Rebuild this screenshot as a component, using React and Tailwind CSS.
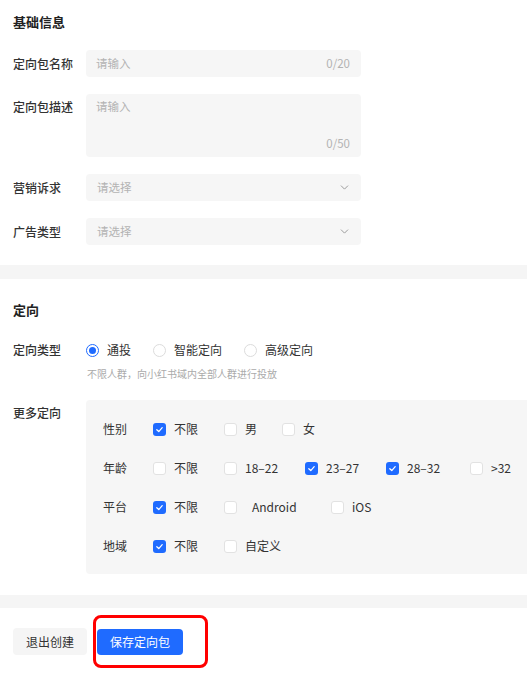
import React from "react";
import { ChevronDown } from "lucide-react";

const font = { fontFamily: '"Noto Sans CJK SC", "Noto Sans", sans-serif' };

const Label = ({ children, className = "" }) => (
  <div className={`w-[73px] shrink-0 text-[12px] leading-[16px] font-medium text-[#333] ${className}`}>
    {children}
  </div>
);

const Check = ({ checked }) =>
  checked ? (
    <span className="w-[13px] h-[13px] rounded-[3px] bg-[#1f6bff] flex items-center justify-center shrink-0">
      <svg width="9" height="9" viewBox="0 0 10 10" fill="none">
        <path d="M2 5.2 L4.2 7.3 L8 3" stroke="white" strokeWidth="1.4" strokeLinecap="round" strokeLinejoin="round" />
      </svg>
    </span>
  ) : (
    <span className="w-[13px] h-[13px] rounded-[3px] bg-white border border-[#e2e2e2] shrink-0" />
  );

const Radio = ({ checked }) =>
  checked ? (
    <span className="w-[13px] h-[13px] rounded-full border border-[#1f6bff] flex items-center justify-center shrink-0">
      <span className="w-[7px] h-[7px] rounded-full bg-[#1f6bff]" />
    </span>
  ) : (
    <span className="w-[13px] h-[13px] rounded-full border border-[#dcdcdc] bg-white shrink-0" />
  );

const Option = ({ checked, label, labelClass = "" }) => (
  <div className="flex items-center gap-[8px]">
    <Check checked={checked} />
    <span className={`text-[12px] leading-[16px] text-[#333] ${labelClass}`}>{label}</span>
  </div>
);

const Select = () => (
  <div className="w-[275px] h-[27px] rounded-[4px] bg-[#f6f6f6] flex items-center justify-between pl-[11px] pr-[10px]">
    <span className="text-[11.5px] text-[#b3b3b3]">请选择</span>
    <ChevronDown size={13} strokeWidth={1.8} className="text-[#999]" />
  </div>
);

const moreRows = [
  {
    name: "性别",
    opts: [
      { label: "不限", checked: true, w: "w-[71px]" },
      { label: "男", w: "w-[58px]" },
      { label: "女" },
    ],
  },
  {
    name: "年龄",
    opts: [
      { label: "不限", w: "w-[71px]" },
      { label: "18–22", w: "w-[81px]" },
      { label: "23–27", checked: true, w: "w-[81px]" },
      { label: "28–32", checked: true, w: "w-[84px]" },
      { label: ">32" },
    ],
  },
  {
    name: "平台",
    opts: [
      { label: "不限", checked: true, w: "w-[71px]" },
      { label: "Android", w: "w-[107px]", labelClass: "ml-[7px]" },
      { label: "iOS" },
    ],
  },
  {
    name: "地域",
    opts: [
      { label: "不限", checked: true, w: "w-[71px]" },
      { label: "自定义" },
    ],
  },
];

export default function App() {
  return (
    <div className="w-[527px] h-[678px] bg-white overflow-hidden" style={font}>
      {/* 基础信息 */}
      <div className="pl-[13px] pt-[14px] pb-[20px]">
        <div className="text-[13px] leading-[16px] font-semibold text-[#222]">基础信息</div>

        <div className="flex items-center mt-[20px]">
          <Label>定向包名称</Label>
          <div className="w-[275px] h-[27px] rounded-[4px] bg-[#f6f6f6] flex items-center justify-between pl-[10px] pr-[11px]">
            <span className="text-[11.5px] text-[#b3b3b3]">请输入</span>
            <span className="text-[11.5px] text-[#b3b3b3]">0/20</span>
          </div>
        </div>

        <div className="flex items-start mt-[17px]">
          <Label className="pt-[5px]">定向包描述</Label>
          <div className="w-[275px] h-[63px] rounded-[4px] bg-[#f6f6f6] flex flex-col justify-between pl-[10px] pr-[11px] pt-[4px] pb-[5px]">
            <span className="text-[11.5px] text-[#b3b3b3]">请输入</span>
            <span className="text-[11.5px] text-[#b3b3b3] self-end">0/50</span>
          </div>
        </div>

        <div className="flex items-center mt-[17px]">
          <Label>营销诉求</Label>
          <Select />
        </div>

        <div className="flex items-center mt-[17px]">
          <Label>广告类型</Label>
          <Select />
        </div>
      </div>

      <div className="h-[14px] bg-[#f5f5f5]" />

      {/* 定向 */}
      <div className="pl-[13px] pt-[23px] pb-[21px]">
        <div className="text-[13px] leading-[16px] font-semibold text-[#222]">定向</div>

        <div className="flex items-center mt-[24px]">
          <Label>定向类型</Label>
          <div className="flex items-center gap-[22px]">
            <div className="flex items-center gap-[8px]">
              <Radio checked />
              <span className="text-[12px] leading-[16px] text-[#333]">通投</span>
            </div>
            <div className="flex items-center gap-[8px]">
              <Radio />
              <span className="text-[12px] leading-[16px] text-[#333]">智能定向</span>
            </div>
            <div className="flex items-center gap-[8px]">
              <Radio />
              <span className="text-[12px] leading-[16px] text-[#333]">高级定向</span>
            </div>
          </div>
        </div>

        <div className="ml-[74px] mt-[9px] text-[10px] leading-[14px] text-[#aaa]">
          不限人群，向小红书域内全部人群进行投放
        </div>

        <div className="flex items-start mt-[19px]">
          <Label className="pt-[5px]">更多定向</Label>
          <div className="flex-1 h-[174px] rounded-l-[4px] bg-[#f6f6f6] pl-[17px] pt-[21px] flex flex-col gap-[23px]">
            {moreRows.map((row) => (
              <div key={row.name} className="flex items-center">
                <span className="w-[50px] text-[12px] leading-[16px] text-[#333]">{row.name}</span>
                {row.opts.map((o) => (
                  <div key={o.label} className={o.w || ""}>
                    <Option checked={o.checked} label={o.label} labelClass={o.labelClass} />
                  </div>
                ))}
              </div>
            ))}
          </div>
        </div>
      </div>

      <div className="h-[13px] bg-[#f5f5f5]" />

      {/* 操作 */}
      <div className="pl-[13px] pt-[20px] flex items-center gap-[10px]">
        <button className="w-[74px] h-[27px] rounded-[4px] bg-[#f5f5f5] text-[12px] text-[#333]">
          退出创建
        </button>
        <div className="relative">
          <button className="w-[86px] h-[26px] rounded-[4px] bg-[#1f6bff] text-[12px] text-white">
            保存定向包
          </button>
          <div className="absolute -left-[4px] -top-[13px] w-[115px] h-[53px] border-[3px] border-[#ff0000] rounded-[8px] pointer-events-none" />
        </div>
      </div>
    </div>
  );
}
